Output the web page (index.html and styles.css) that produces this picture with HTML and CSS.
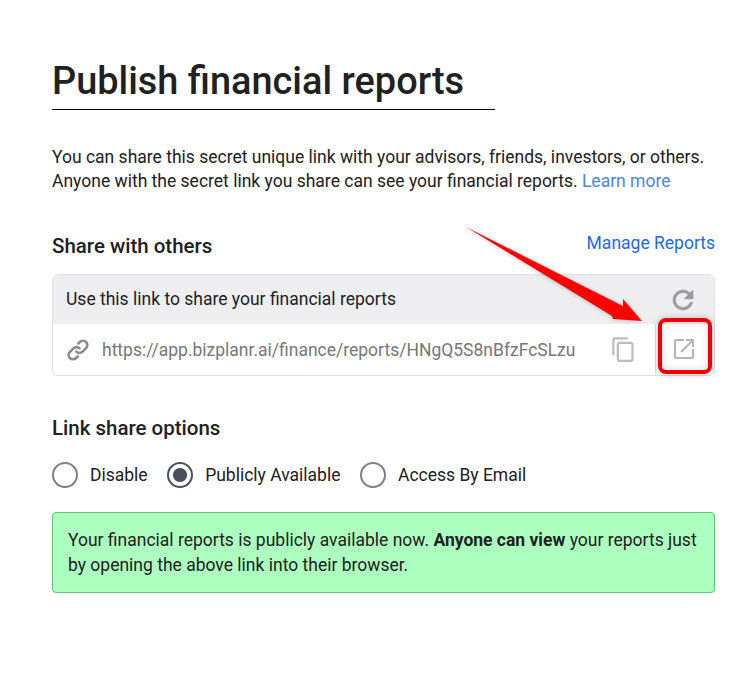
FILE: index.html
```html
<!DOCTYPE HTML>
<html>
    <head>
        <link rel="stylesheet" href="styles.css">
    </head>
    <body>
        <div class="page">
            <h1 class="title">Publish financial reports</h1>
            <p class="intro">You can share this secret unique link with your advisors, friends, investors, or others. Anyone with the secret link you share can see your financial reports. <a class="learn" href="#">Learn more</a></p>

            <div class="shareHead">
                <h2 class="subtitle">Share with others</h2>
                <a class="manage" href="#">Manage Reports</a>
            </div>

            <div class="card">
                <div class="cardHead">
                    <span>Use this link to share your financial reports</span>
                    <svg class="refresh" viewBox="0 0 24 24" width="30" height="30"><path fill="#999" stroke="#999" stroke-width="0.5" d="M17.65 6.35A7.96 7.96 0 0 0 12 4a8 8 0 1 0 7.73 10h-2.08A6 6 0 1 1 12 6c1.66 0 3.14.69 4.22 1.78L13 11h7V4z"/></svg>
                </div>
                <div class="cardBody">
                    <svg class="linkIcon" viewBox="0 0 24 24" width="26" height="26"><g fill="none" stroke="#8a8a8a" stroke-width="2.4" stroke-linecap="round"><path d="M10.5 13.5a4 4 0 0 0 5.7 0l3.2-3.2a4 4 0 0 0-5.7-5.7l-1.4 1.4"/><path d="M13.5 10.5a4 4 0 0 0-5.7 0l-3.2 3.2a4 4 0 0 0 5.7 5.7l1.4-1.4"/></g></svg>
                    <span class="url">https://app.bizplanr.ai/finance/reports/HNgQ5S8nBfzFcSLzu</span>
                    <div class="copyCell">
                        <svg viewBox="0 0 24 24" width="27" height="27"><path fill="#bdbdbd" d="M16 1H4c-1.1 0-2 .9-2 2v14h2V3h12V1zm3 4H8c-1.1 0-2 .9-2 2v14c0 1.1.9 2 2 2h11c1.1 0 2-.9 2-2V7c0-1.1-.9-2-2-2zm0 16H8V7h11v14z"/></svg>
                    </div>
                    <div class="openCell">
                        <svg viewBox="0 0 24 24" width="24" height="24"><path fill="#b5b5b5" d="M20 20H4V4h8V2H4a2 2 0 0 0-2 2v16c0 1.1.9 2 2 2h16a2 2 0 0 0 2-2v-8h-2v8zM14 2v2h4.6L8.3 14.3l1.4 1.4L20 5.4V10h2V2h-8z"/></svg>
                    </div>
                </div>
                <div class="highlight"></div>
            </div>

            <h2 class="subtitle optionsTitle">Link share options</h2>
            <div class="options">
                <label class="option"><span class="radio"></span>Disable</label>
                <label class="option"><span class="radio checked"></span>Publicly Available</label>
                <label class="option"><span class="radio"></span>Access By Email</label>
            </div>

            <div class="notice">Your financial reports is publicly available now. <b>Anyone can view</b> your reports just by opening the above link into their browser.</div>

            <svg class="arrow" viewBox="0 0 200 110" width="200" height="110"><polygon fill="#f00" points="1,1 158,80 158,73 177,95 148,93 147,90"/></svg>
        </div>
    </body>
</html>
```

FILE: styles.css
```css
* {
    box-sizing: border-box;
}

body {
    margin: 0;
    background: #FFFFFF;
    color: #212121;
    font-family: Roboto, "Liberation Sans", sans-serif;
    font-size: 17.5px;
}

.page {
    position: relative;
    width: 755px;
    height: 700px;
    padding: 59px 40px 0 52px;
}

.title {
    width: 443px;
    margin: 0;
    height: 51px;
    border-bottom: 1px solid #000000;
    font-size: 37.9px;
    font-weight: 500;
    line-height: 44px;
}

.intro {
    margin: 35px 0 0 0;
    line-height: 24px;
}

.learn {
    color: #4a86e8;
    text-decoration: none;
}

.shareHead {
    display: flex;
    justify-content: space-between;
    align-items: center;
    margin-top: 39px;
    height: 28px;
}

.subtitle {
    margin: 0;
    font-size: 20.5px;
    font-weight: 500;
    line-height: 28px;
}

.manage {
    color: #2468f2;
    text-decoration: none;
    position: relative;
    top: -3px;
}

.card {
    position: relative;
    margin-top: 14px;
    height: 102px;
    border: 1px solid #e0e0e0;
    border-radius: 6px;
}

.cardHead {
    display: flex;
    justify-content: space-between;
    align-items: center;
    height: 49px;
    padding: 0 16px 2px 13px;
    background: #eeeef0;
    border-radius: 6px 6px 0 0;
}

.refresh {
    margin-top: 3px;
}

.cardBody {
    display: flex;
    align-items: center;
    height: 51px;
    color: #777777;
}

.linkIcon {
    margin: 0 11px 0 12px;
}

.url {
    flex: 1;
}

.copyCell {
    display: flex;
    justify-content: center;
    width: 44px;
    margin-right: 10px;
}

.openCell {
    display: flex;
    justify-content: center;
    align-items: center;
    width: 59px;
    height: 100%;
    padding: 0 2px 2px 0;
    border-left: 1px solid #e0e0e0;
}

.highlight {
    position: absolute;
    left: 605px;
    top: 43px;
    width: 54px;
    height: 56px;
    border: 4px solid #ee0000;
    border-radius: 8px;
    box-shadow: 0 0 6px rgba(0, 0, 0, 0.25), inset 0 0 8px rgba(0, 0, 0, 0.15);
}

.optionsTitle {
    margin-top: 38px;
}

.options {
    display: flex;
    margin-top: 20px;
    height: 26px;
}

.option {
    display: flex;
    align-items: center;
    margin-right: 19.5px;
}

.radio {
    width: 26px;
    height: 26px;
    margin-right: 12px;
    border: 2px solid #808080;
    border-radius: 50%;
    background: #FFFFFF;
}

.radio.checked {
    border-color: #4a4f5c;
    background: radial-gradient(circle, #4a4f5c 0 6.5px, #FFFFFF 7.5px);
}

.notice {
    margin-top: 24px;
    height: 81px;
    padding: 15px 15px;
    background: #adffbf;
    border: 1px solid #5cc878;
    border-radius: 4px;
    line-height: 25px;
}

.arrow {
    position: absolute;
    left: 465px;
    top: 226px;
    filter: drop-shadow(0 1px 2px rgba(0, 0, 0, 0.2));
}
```
